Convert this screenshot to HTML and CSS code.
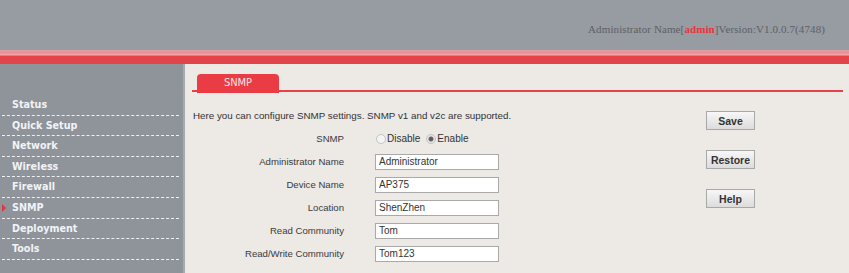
FILE: index.html
```html
<!DOCTYPE html>
<html lang="en">
<head>
    <meta charset="UTF-8">
    <title>SNMP</title>
    <link rel="stylesheet" href="styles.css">
</head>
<body>
<div class="top">
    <div class="info">Administrator Name[<b>admin</b>]Version:V1.0.0.7(4748)</div>
</div>
<div class="stripe"></div>
<div class="main">
    <ul class="menu">
        <li>Status</li>
        <li>Quick Setup</li>
        <li>Network</li>
        <li>Wireless</li>
        <li>Firewall</li>
        <li class="on">SNMP</li>
        <li>Deployment</li>
        <li>Tools</li>
    </ul>
    <div class="content">
        <div class="tabs"><span class="tab">SNMP</span></div>
        <div class="panel">
            <div class="form">
                <p class="tip">Here you can configure SNMP settings. SNMP v1 and v2c are supported.</p>
                <div class="row">
                    <label>SNMP</label>
                    <div class="radios">
                        <span class="radio"></span>Disable
                        <span class="radio checked"></span>Enable
                    </div>
                </div>
                <div class="row">
                    <label>Administrator Name</label>
                    <input type="text" value="Administrator">
                </div>
                <div class="row">
                    <label>Device Name</label>
                    <input type="text" value="AP375">
                </div>
                <div class="row">
                    <label>Location</label>
                    <input type="text" value="ShenZhen">
                </div>
                <div class="row">
                    <label>Read Community</label>
                    <input type="text" value="Tom">
                </div>
                <div class="row">
                    <label>Read/Write Community</label>
                    <input type="text" value="Tom123">
                </div>
            </div>
            <div class="actions">
                <button>Save</button>
                <button>Restore</button>
                <button>Help</button>
            </div>
        </div>
    </div>
</div>
</body>
</html>
```

FILE: styles.css
```css
body,html{
    margin: 0;
    padding: 0;
    width: 100%;
    height: 100%;
    overflow: hidden;
}
body{
    background-color: #ede9e5;
    font-family: "Liberation Sans", Arial, sans-serif;
}
.top{
    height: 50px;
    background-color: #979ba2;
    display: flex;
    justify-content: flex-end;
    align-items: flex-start;
}
.top .info{
    margin: 23px 24px 0 0;
    font-family: "Liberation Serif", serif;
    font-size: 11px;
    color: #5d6066;
    letter-spacing: 0.1px;
}
.top .info b{
    color: #e8343c;
    font-weight: bold;
}
.stripe{
    height: 14px;
    background: linear-gradient(to bottom, #d7a3a8 0, #f08a90 3px, #f2aeb1 5px, #e4434a 6px, #e4434a 14px);
}
.main{
    display: flex;
    height: 209px;
}
.menu{
    list-style: none;
    margin: 0;
    padding: 31px 0 0;
    width: 183px;
    background-color: #8f939a;
    border-right: 2px solid #a6a9ae;
}
.menu li{
    position: relative;
    height: 19.6px;
    line-height: 19px;
    padding-left: 10px;
    margin: 0 4px 0 2px;
    border-bottom: 1px dashed #eef0f4;
    font-family: Verdana, "DejaVu Sans", sans-serif;
    font-size: 9.6px;
    font-weight: bold;
    color: #f2f3f7;
}
.menu li.on:before{
    position: absolute;
    content: '';
    left: 0;
    top: 6px;
    border-left: 4px solid #e8343c;
    border-top: 4px solid transparent;
    border-bottom: 4px solid transparent;
}
.content{
    flex: 1;
    padding: 8px 6px 0 7px;
}
.tabs{
    border-bottom: 2px solid #e4434a;
    padding-left: 5px;
    height: 18px;
}
.tab{
    display: inline-block;
    width: 82px;
    height: 19px;
    line-height: 18px;
    text-align: center;
    background-color: #ea3c44;
    border-radius: 4px 4px 0 0;
    color: #fbe3e4;
    font-family: "DejaVu Sans Condensed", sans-serif;
    font-size: 11px;
}
.panel{
    display: flex;
    padding-top: 18px;
}
.form{
    width: 514px;
}
.tip{
    margin: 0 0 6px 1px;
    font-size: 9.8px;
    color: #333;
}
.row{
    display: flex;
    align-items: center;
    height: 23px;
}
.row label{
    width: 152px;
    text-align: right;
    font-size: 9.6px;
    color: #3a3a3a;
}
.row input{
    margin-left: 31px;
    width: 116px;
    height: 14px;
    padding: 0 3px;
    border: 1px solid #a9a9a9;
    background-color: #fff;
    font-family: "Liberation Sans", Arial, sans-serif;
    font-size: 10px;
    color: #333;
    outline: none;
}
.radios{
    margin-left: 30px;
    display: flex;
    align-items: center;
    font-size: 10px;
    color: #333;
}
.radio{
    display: inline-block;
    width: 8px;
    height: 8px;
    border-radius: 50%;
    border: 1px solid #c4c4c4;
    background-color: #f4f4f4;
    margin: 0 1px 0 2px;
}
.radio.checked{
    background: radial-gradient(circle, #555 0, #666 2px, #e6e6e6 3px);
    margin-left: 6px;
}
.actions{
    display: flex;
    flex-direction: column;
    padding-top: 1px;
}
.actions button{
    width: 49px;
    height: 19px;
    margin-bottom: 20px;
    padding: 0;
    border: 1px solid #a8a8a8;
    background: linear-gradient(to bottom, #f7f7f7, #dcdcdc);
    font-family: "Liberation Sans", Arial, sans-serif;
    font-size: 10.5px;
    font-weight: bold;
    color: #333;
}
```
